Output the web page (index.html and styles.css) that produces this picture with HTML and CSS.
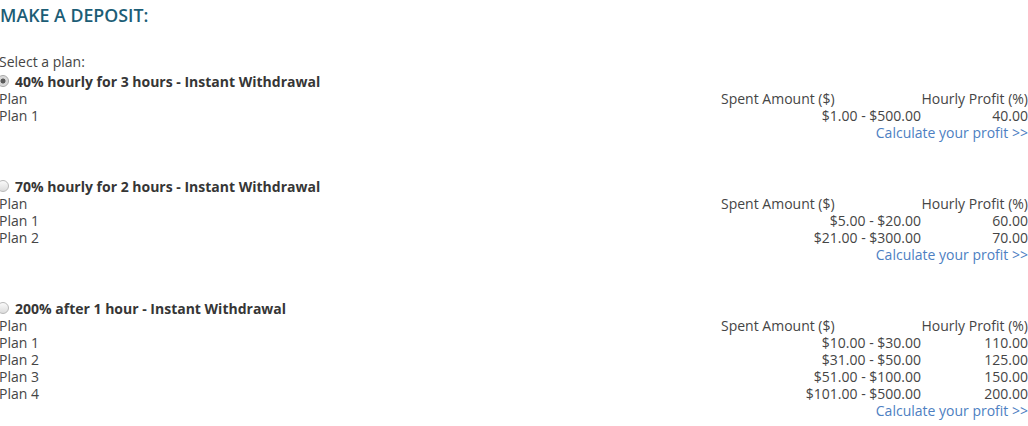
FILE: index.html
```html
<!DOCTYPE html>
<html>
<head>
<meta charset="utf-8">
<link rel="stylesheet" href="styles.css">
</head>
<body>
<div class="page">
  <h2 class="title">MAKE A DEPOSIT:</h2>
  <div class="select">Select a plan:</div>

  <section class="plan">
    <label class="plan-name"><input type="radio" name="plan" class="radio" checked> 40% hourly for 3 hours - Instant Withdrawal</label>
    <div class="grid">
      <div>Plan</div><div class="head-spent">Spent Amount ($)</div><div class="num">Hourly Profit (%)</div>
      <div>Plan 1</div><div class="num">$1.00 - $500.00</div><div class="num">40.00</div>
      <div></div><div class="calc"><a href="#">Calculate your profit &gt;&gt;</a></div>
    </div>
  </section>

  <section class="plan">
    <label class="plan-name"><input type="radio" name="plan" class="radio"> 70% hourly for 2 hours - Instant Withdrawal</label>
    <div class="grid">
      <div>Plan</div><div class="head-spent">Spent Amount ($)</div><div class="num">Hourly Profit (%)</div>
      <div>Plan 1</div><div class="num">$5.00 - $20.00</div><div class="num">60.00</div>
      <div>Plan 2</div><div class="num">$21.00 - $300.00</div><div class="num">70.00</div>
      <div></div><div class="calc"><a href="#">Calculate your profit &gt;&gt;</a></div>
    </div>
  </section>

  <section class="plan">
    <label class="plan-name"><input type="radio" name="plan" class="radio"> 200% after 1 hour - Instant Withdrawal</label>
    <div class="grid">
      <div>Plan</div><div class="head-spent">Spent Amount ($)</div><div class="num">Hourly Profit (%)</div>
      <div>Plan 1</div><div class="num">$10.00 - $30.00</div><div class="num">110.00</div>
      <div>Plan 2</div><div class="num">$31.00 - $50.00</div><div class="num">125.00</div>
      <div>Plan 3</div><div class="num">$51.00 - $100.00</div><div class="num">150.00</div>
      <div>Plan 4</div><div class="num">$101.00 - $500.00</div><div class="num">200.00</div>
      <div></div><div class="calc"><a href="#">Calculate your profit &gt;&gt;</a></div>
    </div>
  </section>
</div>
</body>
</html>
```

FILE: styles.css
```css
html, body {
  margin: 0;
  padding: 0;
  background: #fff;
}
body {
  font-family: "Open Sans", "Liberation Sans", sans-serif;
  font-size: 14px;
  line-height: 17px;
  color: #454545;
  overflow: hidden;
}
.page {
  margin-left: -1px;
}
.title {
  margin: 4px 0 0 0;
  font-size: 17.8px;
  line-height: 22px;
  font-weight: 600;
  color: #1c5d76;
  padding-left: 1px;
}
.select {
  margin-top: 27px;
}
.plan {
  padding-top: 2px;
  margin-bottom: 34px;
}
.plan-name {
  display: flex;
  align-items: center;
  height: 18px;
  font-weight: 700;
  color: #363636;
}
.radio {
  appearance: none;
  -webkit-appearance: none;
  width: 12px;
  height: 12px;
  margin: 0 6px 0 -2px;
  border-radius: 50%;
  border: 1px solid #b8b8b8;
  background: linear-gradient(#fafafa, #dcdcdc);
  box-sizing: border-box;
  flex: none;
}
.radio:checked {
  background: radial-gradient(circle, #5a5a5a 0 2.2px, #d4d4d4 2.8px, #e6e6e6 100%);
  border-color: #a8a8a8;
}
.grid {
  display: grid;
  grid-template-columns: 1fr 200px 107px;
}
.head-spent {
  text-align: left;
}
.num {
  text-align: right;
}
.calc {
  grid-column: 2 / 4;
  text-align: right;
}
.calc a {
  color: #4d80c2;
  text-decoration: none;
}
```
